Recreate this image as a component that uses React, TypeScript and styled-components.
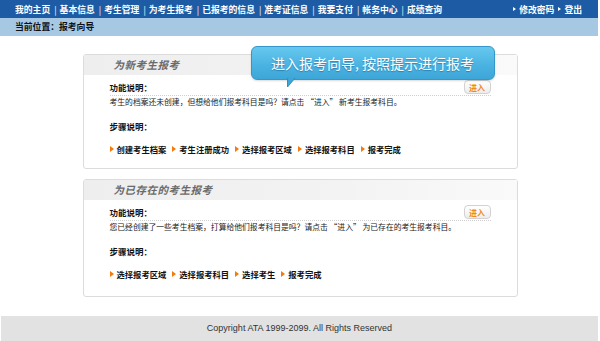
import styled, {createGlobalStyle} from "styled-components";

const navItems = ["我的主页", "基本信息", "考生管理", "为考生报考", "已报考的信息", "准考证信息", "我要支付", "帐务中心", "成绩查询"]

const sections = [
    {
        title: "为新考生报考",
        desc: "考生的档案还未创建，但想给他们报考科目是吗？请点击 “进入” 新考生报考科目。",
        steps: ["创建考生档案", "考生注册成功", "选择报考区域", "选择报考科目", "报考完成"],
        tip: true,
        bottom: 13,
    },
    {
        title: "为已存在的考生报考",
        desc: "您已经创建了一些考生档案，打算给他们报考科目是吗？请点击 “进入” 为已存在的考生报考科目。",
        steps: ["选择报考区域", "选择报考科目", "选择考生", "报考完成"],
        tip: false,
        bottom: 16,
    },
]

export default function App() {
    return (
        <>
            <GlobalStyle/>
            <Page>
                <TopNav>
                    <NavList>
                        {navItems.map(item => <NavItem key={item}>{item}</NavItem>)}
                    </NavList>
                    <NavList>
                        <UserLink>修改密码</UserLink>
                        <UserLink>登出</UserLink>
                    </NavList>
                </TopNav>
                <Breadcrumb>当前位置：报考向导</Breadcrumb>
                <Main>
                    {sections.map(section =>
                        <Panel key={section.title}>
                            <PanelHeader>{section.title}</PanelHeader>
                            {section.tip && (
                                <Tooltip>
                                    进入报考向导, 按照提示进行报考
                                    <TooltipTail width="10" height="10" viewBox="0 0 10 10">
                                        <path d="M0.5 0 L0.5 9 L8 0 Z" fill="#3da6d8" stroke="#2f8fc0" strokeWidth="1"/>
                                        <path d="M1.5 0 L7 0" stroke="#3da6d8" strokeWidth="2"/>
                                    </TooltipTail>
                                </Tooltip>
                            )}
                            <PanelBody $bottom={section.bottom}>
                                <FuncRow>
                                    <Label>功能说明：</Label>
                                    <EnterButton>进入</EnterButton>
                                </FuncRow>
                                <Desc>{section.desc}</Desc>
                                <StepLabel>步骤说明：</StepLabel>
                                <Steps>
                                    {section.steps.map(step => <Step key={step}>{step}</Step>)}
                                </Steps>
                            </PanelBody>
                        </Panel>
                    )}
                </Main>
                <Footer>Copyright ATA 1999-2099. All Rights Reserved</Footer>
            </Page>
        </>
    )
}

const GlobalStyle = createGlobalStyle`
  body {
    margin: 0;
    background: #fff;
    font-family: "Noto Sans CJK SC", sans-serif;
  }
`

const Page = styled.div`
  width: 598px;
`

const TopNav = styled.div`
  display: flex;
  justify-content: space-between;
  align-items: center;
  height: 18px;
  padding: 0 16px 0 15px;
  background: #1d5ca5;
  color: #fff;
  font-size: 8.8px;
  font-weight: bold;
`

const NavList = styled.div`
  display: flex;
  align-items: center;
`

const NavItem = styled.span`
  & + &::before {
    content: "|";
    font-weight: normal;
    margin: 0 3px 0 4px;
  }
`

const UserLink = styled.span`
  display: flex;
  align-items: center;
  margin-left: 4px;

  &::before {
    content: "";
    border-left: 3px solid #fff;
    border-top: 2.5px solid transparent;
    border-bottom: 2.5px solid transparent;
    margin-right: 3px;
  }
`

const Breadcrumb = styled.div`
  height: 18px;
  line-height: 18px;
  padding-left: 15px;
  background: #a6c8e3;
  color: #111;
  font-size: 8.8px;
  font-weight: bold;
`

const Main = styled.main`
  display: flex;
  flex-direction: column;
  align-items: center;
  gap: 10px;
  padding: 18px 0 19px 2px;
`

const Panel = styled.section`
  position: relative;
  width: 433px;
  border: 1px solid #dcdcdc;
  border-radius: 3px;
  background: #fff;
`

const PanelHeader = styled.h2`
  margin: 0;
  height: 20px;
  line-height: 20px;
  padding-left: 30px;
  background: linear-gradient(90deg, #eeeeee 0%, #f3f3f3 60%, #fafafa 100%);
  color: #6a6a6a;
  font-size: 10.5px;
  font-style: italic;
  font-weight: bold;
  letter-spacing: 0.5px;
`

const Tooltip = styled.div`
  position: absolute;
  left: 167px;
  top: -9px;
  width: 242px;
  height: 32px;
  line-height: 32px;
  border: 1px solid #3597c9;
  border-radius: 6px;
  background: linear-gradient(180deg, #66c8ef 0%, #4bb3e2 55%, #3da6d8 100%);
  color: #fff;
  font-size: 14px;
  text-align: center;
  text-shadow: 0 1px 1px rgba(0, 60, 110, 0.4);
  box-shadow: 0 1px 2px rgba(0, 0, 0, 0.15);
`

const TooltipTail = styled.svg`
  position: absolute;
  left: 35px;
  bottom: -9px;
`

const PanelBody = styled.div<{ $bottom: number }>`
  padding: 5px 26px ${props => props.$bottom}px 26px;
  font-size: 7.8px;
  color: #222;
`

const FuncRow = styled.div`
  display: flex;
  justify-content: space-between;
  align-items: center;
  height: 14px;
  padding-bottom: 1px;
  border-bottom: 1px dotted #cfcfcf;
`

const Label = styled.span`
  font-size: 8.5px;
  font-weight: bold;
  color: #111;
  line-height: 11px;
`

const EnterButton = styled.button`
  width: 27px;
  height: 14px;
  padding: 0;
  border: 1px solid #d2d2d2;
  border-radius: 4px;
  background: linear-gradient(180deg, #ffffff 0%, #ededed 100%);
  color: #f08a1c;
  font-family: "Noto Sans CJK SC", sans-serif;
  font-size: 8px;
  font-weight: bold;
`

const Desc = styled.p`
  margin: 0;
  line-height: 12px;
`

const StepLabel = styled(Label)`
  display: block;
  margin-top: 12px;
  line-height: 12px;
`

const Steps = styled.div`
  display: flex;
  align-items: center;
  margin-top: 11px;
  height: 12px;
`

const Step = styled.span`
  display: flex;
  align-items: center;
  margin-right: 6px;
  font-size: 8.3px;
  font-weight: bold;
  color: #111;

  &::before {
    content: "";
    border-left: 4px solid #f47a0a;
    border-top: 3px solid transparent;
    border-bottom: 3px solid transparent;
    margin-right: 3px;
  }
`

const Footer = styled.footer`
  height: 25px;
  line-height: 25px;
  margin-left: 1px;
  background: #e2e2e2;
  color: #333;
  font-family: "Liberation Sans", Arial, sans-serif;
  font-size: 9px;
  text-align: center;
`
